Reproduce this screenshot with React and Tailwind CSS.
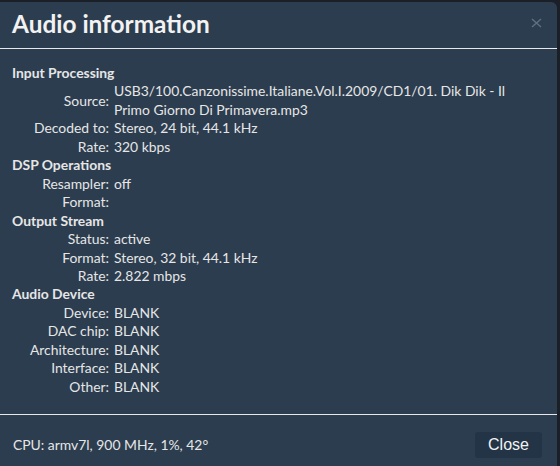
const sections = [
  {
    title: 'Input Processing',
    rows: [
      ['Source:', 'USB3/100.Canzonissime.Italiane.Vol.I.2009/CD1/01. Dik Dik - Il Primo Giorno Di Primavera.mp3'],
      ['Decoded to:', 'Stereo, 24 bit, 44.1 kHz'],
      ['Rate:', '320 kbps'],
    ],
  },
  {
    title: 'DSP Operations',
    rows: [
      ['Resampler:', 'off'],
      ['Format:', ''],
    ],
  },
  {
    title: 'Output Stream',
    rows: [
      ['Status:', 'active'],
      ['Format:', 'Stereo, 32 bit, 44.1 kHz'],
      ['Rate:', '2.822 mbps'],
    ],
  },
  {
    title: 'Audio Device',
    rows: [
      ['Device:', 'BLANK'],
      ['DAC chip:', 'BLANK'],
      ['Architecture:', 'BLANK'],
      ['Interface:', 'BLANK'],
      ['Other:', 'BLANK'],
    ],
  },
]

export default function App() {
  return (
    <div className="w-[560px] h-[466px] overflow-hidden bg-[#1b2028] font-['Lato','Open_Sans',sans-serif]">
      <div className="mt-[2px] w-[557px] h-[470px] bg-[#2c3d4f] rounded-tr-[6px] text-[#e6e6e6]">
        {/* header */}
        <div className="flex items-center justify-between h-[47px] pl-[12px] pr-[15px] border-b border-[#e8e8e8]">
          <h4 className="text-[24.4px] font-bold leading-none text-[#f2f2f2] -mt-[2px]">Audio information</h4>
          <svg width="11" height="10" viewBox="0 0 11 10" className="text-[#5f6f80] -mt-[4px]">
            <path d="M1 1L10 9M10 1L1 9" stroke="currentColor" strokeWidth="1.5" />
          </svg>
        </div>

        {/* body */}
        <div className="pt-[15px] pb-[18px] pl-[12px] pr-[15px] text-[13.9px] leading-[18.45px]">
          {sections.map(s => (
            <div key={s.title}>
              <div className="font-bold">{s.title}</div>
              {s.rows.map(([label, value], i) => (
                <div key={i} className="flex items-center">
                  <div className="w-[102px] shrink-0 text-right pr-[5px]">{label}</div>
                  <div className="w-[400px]">{value}</div>
                </div>
              ))}
            </div>
          ))}
        </div>

        {/* footer */}
        <div className="flex items-center justify-between border-t border-[#e8e8e8] pt-[17px] pl-[13px] pr-[15px]">
          <div className="text-[13.9px]">CPU: armv7l, 900 MHz, 1%, 42°</div>
          <button className="w-[67px] h-[26px] rounded-[3px] bg-[#233446] text-[#f2f2f2] text-[16px] font-['Liberation_Sans',Arial,sans-serif]">
            Close
          </button>
        </div>
      </div>
    </div>
  )
}
